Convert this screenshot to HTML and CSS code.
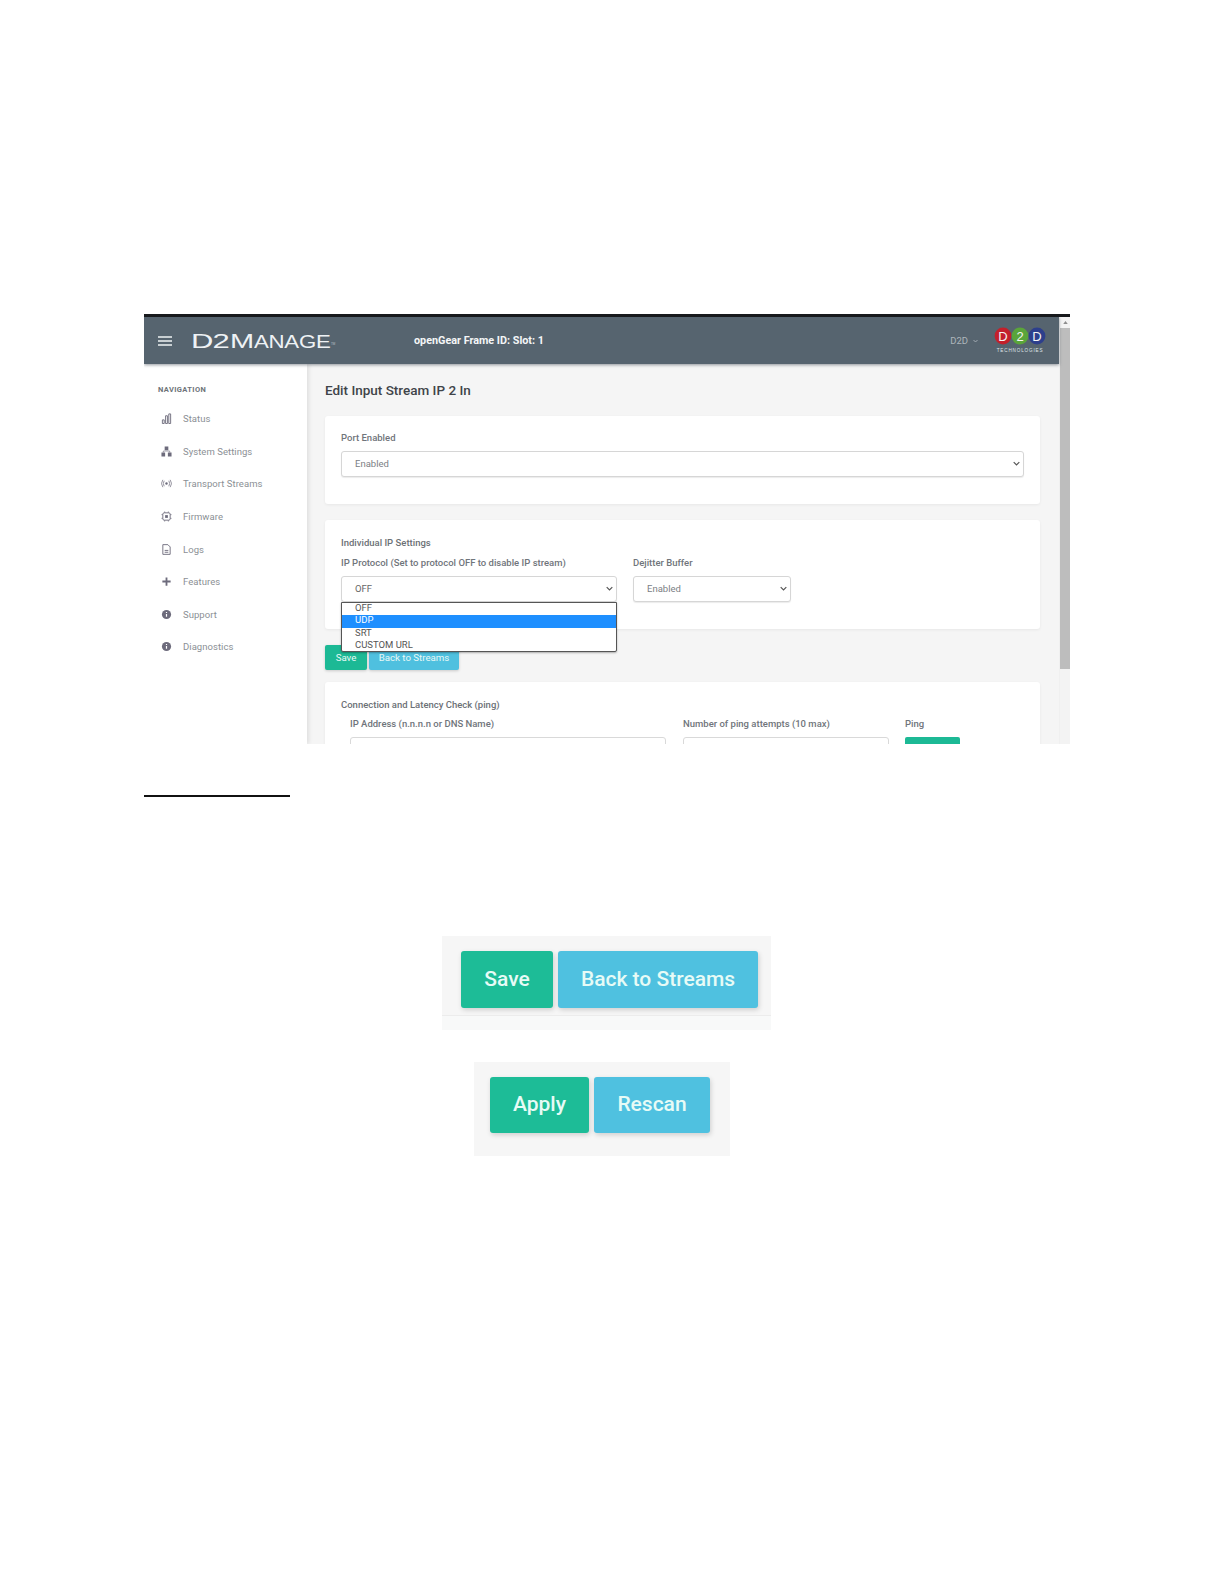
FILE: index.html
```html
<!DOCTYPE html>
<html lang="en">
<head>
<meta charset="utf-8">
<title>D2Manage</title>
<link rel="stylesheet" href="styles.css">
</head>
<body>
<svg class="defs" width="0" height="0" aria-hidden="true">
  <symbol id="chev" viewBox="0 0 10 6"><path d="M1 1l4 4 4-4" fill="none" stroke="currentColor" stroke-width="1.7"/></symbol>
</svg>
<section class="frame">
  <div class="app">
    <header class="topbar">
      <svg class="burger" viewBox="0 0 14 10"><path d="M0 1h14M0 5h14M0 9h14" stroke="#eef2f4" stroke-width="1.3"/></svg>
      <div class="brand"><span class="brand-d2">D2</span><span class="brand-m">M</span><span class="brand-rest">ANAGE</span><span class="tm">TM</span></div>
      <div class="frame-id">openGear Frame ID: Slot: 1</div>
      <div class="user">D2D <svg class="user-chev"><use href="#chev"/></svg></div>
      <svg class="logo" viewBox="0 0 54 30">
        <circle cx="9" cy="9" r="8.4" fill="#c3202b"/>
        <circle cx="26" cy="9" r="8.4" fill="#5aa53a"/>
        <circle cx="43" cy="9" r="8.4" fill="#2d3f8c"/>
        <text x="9" y="13.500" class="logo-letter">D</text>
        <text x="26" y="13.500" class="logo-letter">2</text>
        <text x="43" y="13.500" class="logo-letter">D</text>
        <text x="26" y="25" class="logo-sub">TECHNOLOGIES</text>
      </svg>
    </header>
    <div class="workspace">
      <nav class="sidebar">
        <div class="nav-title">NAVIGATION</div>
        <a class="nav-item"><svg class="nav-icon" viewBox="0 0 12 12"><path d="M1.500 7.500h2v4h-2zM5 3h2v8.500H5zM8.500 1h2v10.500h-2z" fill="none" stroke="currentColor"/></svg>Status</a>
        <a class="nav-item"><svg class="nav-icon" viewBox="0 0 12 12"><path d="M4 0.500h4v4H4zM0.500 7h4v4.500h-4zM7.500 7h4v4.500h-4z" fill="currentColor"/><path d="M2.500 7V5.500h7V7" fill="none" stroke="currentColor" stroke-width=".7"/></svg>System Settings</a>
        <a class="nav-item"><svg class="nav-icon" viewBox="0 0 12 12"><circle cx="6" cy="6" r="1.300" fill="currentColor"/><path d="M3.500 3Q1.500 6 3.500 9M8.500 3q2 3 0 6M2 2q-3 4 0 8M10 2q3 4 0 8" fill="none" stroke="currentColor" stroke-width=".8"/></svg>Transport Streams</a>
        <a class="nav-item"><svg class="nav-icon" viewBox="0 0 12 12"><rect x="2" y="2" width="8" height="8" rx="1.500" fill="none" stroke="currentColor"/><rect x="4.500" y="4.500" width="3" height="3" fill="currentColor"/><path d="M4 0.500v1.500M8 0.500v1.500M4 10v1.500M8 10v1.500M0.500 4H2M0.500 8H2M10 4h1.500M10 8h1.500" stroke="currentColor" stroke-width=".8"/></svg>Firmware</a>
        <a class="nav-item"><svg class="nav-icon" viewBox="0 0 12 12"><path d="M2 .7h5.500L10 3.200v8.100H2z" fill="none" stroke="currentColor"/><path d="M4 7h4M4 9h4" stroke="currentColor"/></svg>Logs</a>
        <a class="nav-item"><svg class="nav-icon" viewBox="0 0 12 12"><path d="M6 1.500v9M1.500 6h9" stroke="currentColor" stroke-width="2"/></svg>Features</a>
        <a class="nav-item"><svg class="nav-icon" viewBox="0 0 12 12"><circle cx="6" cy="6" r="5" fill="currentColor"/><path d="M6 5.500v3M6 3.200v1.200" stroke="#fff" stroke-width="1.300"/></svg>Support</a>
        <a class="nav-item"><svg class="nav-icon" viewBox="0 0 12 12"><circle cx="6" cy="6" r="5" fill="currentColor"/><path d="M6 5.500v3M6 3.200v1.200" stroke="#fff" stroke-width="1.300"/></svg>Diagnostics</a>
      </nav>
      <main class="content">
        <h1 class="page-title">Edit Input Stream IP 2 In</h1>
        <div class="card card-port">
          <div class="label">Port Enabled</div>
          <div class="select"><span>Enabled</span><svg class="chev"><use href="#chev"/></svg></div>
        </div>
        <div class="card card-ip">
          <div class="label">Individual IP Settings</div>
          <div class="field-row">
            <div class="field field-protocol">
              <div class="label">IP Protocol (Set to protocol OFF to disable IP stream)</div>
              <div class="select select-open"><span>OFF</span><svg class="chev"><use href="#chev"/></svg>
                <ul class="dropdown">
                  <li>OFF</li>
                  <li class="active">UDP</li>
                  <li>SRT</li>
                  <li>CUSTOM URL</li>
                </ul>
              </div>
            </div>
            <div class="field field-buffer">
              <div class="label">Dejitter Buffer</div>
              <div class="select"><span>Enabled</span><svg class="chev"><use href="#chev"/></svg></div>
            </div>
          </div>
        </div>
        <div class="actions">
          <button class="btn btn-green btn-save">Save</button>
          <button class="btn btn-blue btn-back">Back to Streams</button>
        </div>
        <div class="card card-ping">
          <div class="label">Connection and Latency Check (ping)</div>
          <div class="ping-row">
            <div class="ping-ip"><div class="label">IP Address (n.n.n.n or DNS Name)</div><div class="input"></div></div>
            <div class="ping-count"><div class="label">Number of ping attempts (10 max)</div><div class="input"></div></div>
            <div class="ping-go"><div class="label">Ping</div><div class="ping-btn"></div></div>
          </div>
        </div>
      </main>
    </div>
  </div>
  <div class="scrollbar">
    <div class="scroll-up"><svg viewBox="0 0 6 4"><path d="M0 4l3-4 3 4z" fill="#8d8d8d"/></svg></div>
    <div class="scroll-thumb"></div>
  </div>
</section>
<hr class="footnote-rule">
<section class="shot shot-one">
  <div class="shot-buttons shot-one-buttons">
    <button class="big big-green big-save">Save</button>
    <button class="big big-blue big-back">Back to Streams</button>
  </div>
</section>
<section class="shot shot-two">
  <div class="shot-buttons shot-two-buttons">
    <button class="big big-green big-apply">Apply</button>
    <button class="big big-blue big-rescan">Rescan</button>
  </div>
</section>
</body>
</html>
```
FILE: styles.css
```css
* { box-sizing: border-box; }
html, body { margin: 0; padding: 0; background: #fff; }
body { height: 1584px; padding-top: 314px; font-family: Roboto, "Liberation Sans", sans-serif; overflow: hidden; }
.defs { position: absolute; }

.frame { margin-left: 144px; width: 926px; height: 430px; border-top: 3px solid #17191c; display: flex; overflow: hidden; background: #f5f5f5; }
.app { width: 915px; display: flex; flex-direction: column; flex: none; }

.topbar { height: 47px; flex: none; background: #56646f; display: flex; align-items: center; box-shadow: 0 1px 3px rgba(60,70,80,.55); position: relative; z-index: 2; color: #fff; }
.burger { width: 14px; height: 10px; margin-left: 14px; flex: none; }
.brand { margin: 3px 0 0 19px; width: 145px; color: #eef2f5; font-family: "Liberation Sans", sans-serif; white-space: nowrap; display: flex; align-items: baseline; line-height: 20px; }
.brand-d2, .brand-m, .brand-rest { display: inline-block; transform-origin: left center; }
.brand-d2 { font-size: 20px; width: 39px; letter-spacing: -.5px; transform: scaleX(1.55); }
.brand-m { font-size: 20px; width: 24px; transform: scaleX(1.45); }
.brand-rest { font-size: 17.500px; width: 77px; letter-spacing: -.2px; transform: scaleX(1.27); }
.tm { font-size: 3px; align-self: flex-start; margin: 3px 0 0 0; color: #b7c0c6; }
.frame-id { margin-left: 78px; font-size: 10.800px; font-weight: 700; color: #f4f6f7; white-space: nowrap; }
.user { margin-left: auto; font-size: 9.500px; color: #aeb6bc; display: flex; align-items: center; gap: 5px; }
.user-chev { width: 5px; height: 4px; }
.logo { width: 54px; height: 30px; margin: 3px 11px 0 16px; flex: none; overflow: visible; }
.logo-letter { font: 400 13px "Liberation Sans", sans-serif; fill: #f3f3f3; text-anchor: middle; }
.logo-sub { font: 400 4.600px "Liberation Sans", sans-serif; fill: #dfe4e7; text-anchor: middle; letter-spacing: .85px; }

.workspace { flex: 1; display: flex; min-height: 0; }
.sidebar { width: 163px; flex: none; background: #fff; padding: 20px 0 0 14px; box-shadow: 2px 0 4px rgba(0,0,0,.09); position: relative; z-index: 1; }
.nav-title { font-size: 7.500px; line-height: 12px; font-weight: 700; letter-spacing: .4px; color: #6d7378; margin-bottom: 6.500px; }
.nav-item { display: flex; align-items: center; height: 32.600px; font-size: 9.500px; letter-spacing: .05px; color: #8b9095; white-space: nowrap; }
.nav-icon { width: 11px; height: 11px; color: #6d6b7c; margin: 0 11px 0 3px; flex: none; }

.content { flex: 1; min-width: 0; padding: 16px 19px 0 18px; overflow: hidden; }
.page-title { margin: 0 0 16px; font-size: 13.500px; line-height: 20px; font-weight: 500; color: #3f4449; white-space: nowrap; }
.card { background: #fff; border-radius: 3px; box-shadow: 0 1px 3px rgba(0,0,0,.06); padding: 16px 16px 0; }
.card-port { height: 88px; padding-top: 15px; }
.card-ip { height: 109px; margin-top: 16px; }
.card-ping { height: 100px; margin-top: 12px; }
.label { font-size: 9.500px; line-height: 14px; font-weight: 500; color: #70757b; white-space: nowrap; }
.card-ip > .label, .card-ping > .label { color: #6c7176; }
.card-port > .label { margin-bottom: 6px; }
.select { height: 26px; background: #fff; border: 1px solid #d6d6d6; border-radius: 3px; display: flex; align-items: center; justify-content: space-between; padding: 0 3px 2px 13px; font-size: 9.500px; color: #7b8085; box-shadow: 0 1px 1px rgba(0,0,0,.08); position: relative; }
.chev { width: 7px; height: 5px; color: #555; margin-top: 1px; }
.field-row { display: flex; gap: 16px; margin-top: 6px; }
.field .label { margin-bottom: 6px; }
.field-protocol { width: 276px; }
.field-buffer { width: 158px; }
.select-open { color: #666; }
.dropdown { position: absolute; left: -1px; right: -1px; top: 25px; height: 50px; margin: 0; padding: 0; list-style: none; background: #fff; border: 1px solid #555; border-radius: 0 0 2px 2px; box-shadow: 0 1px 2px rgba(0,0,0,.3); z-index: 5; font-size: 9.500px; color: #555; }
.dropdown li { height: 12.300px; line-height: 10.500px; padding-left: 13px; }
.dropdown .active { background: #1e8fff; color: #fff; }

.actions { display: flex; gap: 2px; margin-top: 16px; height: 25px; }
.btn { border: 0; border-radius: 2px; padding: 0 0 1px; height: 25px; font: 400 9.700px Roboto, sans-serif; color: #e9f8f6; box-shadow: 0 1px 3px rgba(0,0,0,.18); }
.btn-green { background: #1cb995; }
.btn-blue { background: #4fc0df; }
.btn-save { width: 42px; }
.btn-back { width: 90px; }

.ping-row { display: flex; gap: 17px; margin: 5px 0 0 9px; }
.ping-row .label { margin-bottom: 6px; }
.ping-ip { width: 316px; }
.ping-count { width: 206px; }
.ping-go { margin-left: -1px; }
.input { height: 26px; border: 1px solid #d9d9d9; border-radius: 3px; background: #fff; }
.ping-btn { width: 55px; height: 26px; background: #1cb995; border-radius: 2px; }

.scrollbar { width: 11px; flex: none; background: #f3f3f3; border-left: 1px solid #f0f0f0; }
.scroll-up { height: 11px; display: flex; align-items: center; justify-content: center; }
.scroll-up svg { width: 5px; height: 3px; }
.scroll-thumb { height: 341px; background: #bdbdbd; }

.footnote-rule { margin: 51px 0 0 144px; width: 146px; height: 2px; border: 0; background: #111; }

.shot { background: #f6f6f6; height: 94px; }
.shot-one { width: 329px; margin: 139px 0 0 442px; padding: 15px 0 0 19px; background: linear-gradient(#f6f6f6 79px, #ececec 79px, #ececec 80px, #f8f9f9 80px); }
.shot-two { width: 256px; margin: 32px 0 0 474px; padding: 15px 0 0 16px; }
.shot-buttons { display: flex; gap: 5px; }
.big { border: 0; border-radius: 3px; padding: 0 0 2px; font: 500 21px Roboto, sans-serif; color: #e7fbf6; box-shadow: 1px 2px 5px rgba(0,0,0,.16); }
.big-green { background: #1dbc97; }
.big-blue { background: #4fc1e0; }
.big-save { width: 92px; height: 57px; }
.big-back { width: 200px; height: 57px; }
.big-apply { width: 99px; height: 56px; }
.big-rescan { width: 116px; height: 56px; }
```
